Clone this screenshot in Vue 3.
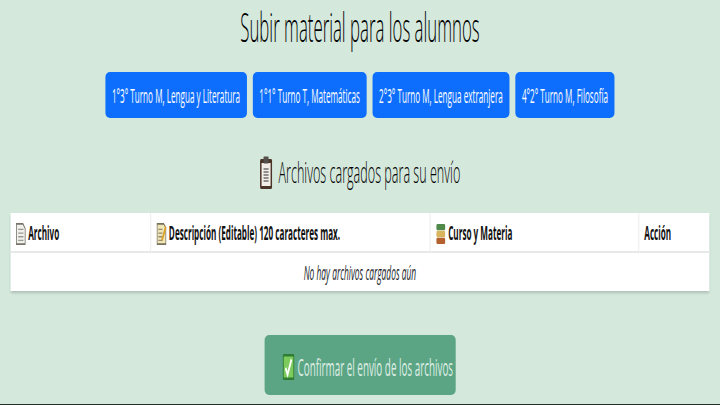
<script setup>
const courses = [
  '1°3° Turno M, Lengua y Literatura',
  '1°1° Turno T, Matemáticas',
  '2°3° Turno M, Lengua extranjera',
  '4°2° Turno M, Filosofía'
]
</script>

<template>
  <div class="stage">
    <main class="page">
      <h1 class="title">Subir material para los alumnos</h1>
      <div class="courses">
        <button v-for="c in courses" :key="c" class="course">{{ c }}</button>
      </div>
      <h2 class="subtitle">
        <svg class="clip" viewBox="0 0 26 34" preserveAspectRatio="none" aria-hidden="true">
          <rect x="1" y="3" width="24" height="30" rx="2" fill="#4a3528" />
          <rect x="4" y="7" width="18" height="23" fill="#f3efe8" />
          <rect x="8" y="0.5" width="10" height="7" rx="1" fill="#55504b" />
          <path d="M8 13h10M8 16h10M8 19h10M8 22h10M8 25h10" stroke="#6f6f6f" stroke-width="1.5" />
        </svg>
        Archivos cargados para su envío
      </h2>
      <table class="files">
        <thead>
          <tr>
            <th class="c1">
              <svg class="ico" viewBox="0 0 24 24" preserveAspectRatio="none" aria-hidden="true">
                <path d="M2 1h15l5 5v17H2z" fill="#f0f0ec" stroke="#77736b" stroke-width="1.8" />
                <path d="M6 7h12M6 11h12M6 15h12M6 19h12" stroke="#9a978f" stroke-width="1.5" />
              </svg>
              Archivo
            </th>
            <th class="c2">
              <svg class="ico" viewBox="0 0 24 24" preserveAspectRatio="none" aria-hidden="true">
                <path d="M2 1h15l5 4v18H2z" fill="#f1e6b8" stroke="#77705a" stroke-width="1.8" />
                <path d="M5 7h9M5 11h9M5 15h9M5 19h9" stroke="#8f8a70" stroke-width="1.5" />
                <path d="M22 4 13 19" stroke="#d9a02c" stroke-width="3.5" />
              </svg>
              Descripción (Editable) 120 caracteres max.
            </th>
            <th class="c3">
              <svg class="ico" viewBox="0 0 24 24" preserveAspectRatio="none" aria-hidden="true">
                <rect x="2" y="1" width="20" height="7" rx="2" fill="#4f8a4a" />
                <rect x="2" y="8.5" width="20" height="7" rx="2" fill="#d8b45c" />
                <rect x="2" y="16" width="20" height="7" rx="2" fill="#b5602f" />
              </svg>
              Curso y Materia
            </th>
            <th class="c4">Acción</th>
          </tr>
        </thead>
        <tbody>
          <tr>
            <td colspan="4" class="empty">No hay archivos cargados aún</td>
          </tr>
        </tbody>
      </table>
      <button class="confirm">
        <svg class="check" viewBox="0 0 24 24" preserveAspectRatio="none" aria-hidden="true">
          <rect x="1" y="1" width="22" height="22" rx="2" fill="#7ccb5c" stroke="#2f7d32" stroke-width="2.4" />
          <path d="M6 13l4 6 8-14" fill="none" stroke="#fff" stroke-width="3.4" />
        </svg>
        Confirmar el envío de los archivos
      </button>
    </main>
    <div class="edge"></div>
  </div>
</template>

<style>
html, body { margin: 0; overflow: hidden; background: #d4e8dc; }
</style>

<style scoped>
.stage {
  height: 405px;
  width: 720px;
  overflow: hidden;
  display: flex;
  flex-direction: column;
  justify-content: space-between;
}
.page {
  width: 1714px;
  flex: none;
  transform: scaleX(0.42);
  transform-origin: left top;
  box-sizing: border-box;
  padding: 0 25px;
  display: flex;
  flex-direction: column;
  align-items: center;
  font-family: "Open Sans", "Liberation Sans", sans-serif;
  color: #212529;
}
.title {
  margin: 1px 0 0;
  height: 52px;
  line-height: 52px;
  font-size: 40px;
  font-weight: 300;
  color: #000;
}
.courses {
  display: flex;
  gap: 14px;
  margin-top: 19px;
}
.course {
  height: 46px;
  padding: 0 15.8px;
  border: none;
  border-radius: 11px / 5px;
  background: #0d6efd;
  color: #fff;
  font: inherit;
  font-size: 19.4px;
}
.subtitle {
  display: flex;
  align-items: center;
  gap: 14px;
  margin: 33px 0 0;
  height: 40px;
  font-size: 30px;
  font-weight: 300;
  color: #000;
}
.clip { width: 31px; height: 34px; margin-top: 4px; }
.files {
  width: 1664px;
  margin-top: 22px;
  border-collapse: collapse;
  table-layout: fixed;
  background: #fff;
  box-shadow: 0 2px 4px rgba(0, 0, 0, 0.18);
}
th, td { padding: 0 12px; font-size: 19.4px; }
th {
  height: 38px;
  text-align: left;
  font-weight: 700;
  color: #111;
  border-bottom: 2px solid #e6e9e7;
  border-left: 2px solid #e6e9e7;
}
th:first-child { border-left: none; }
.c1 { width: 309px; }
.c2 { width: 639px; }
.c3 { width: 471px; }
.ico { width: 25px; height: 22px; vertical-align: -5px; }
.empty {
  height: 38px;
  text-align: center;
  font-style: italic;
  font-size: 20px;
  color: #212529;
}
.confirm {
  margin-top: 44px;
  width: 455px;
  height: 60px;
  padding: 3px 0 0 38px;
  border: none;
  border-radius: 11px / 5px;
  background: #5ca584;
  color: #dceee4;
  font: inherit;
  font-size: 23.5px;
  display: flex;
  align-items: center;
  justify-content: center;
  gap: 7px;
}
.check { width: 28px; height: 26px; }
.edge { height: 1px; background: #23302a; flex: none; }
</style>
